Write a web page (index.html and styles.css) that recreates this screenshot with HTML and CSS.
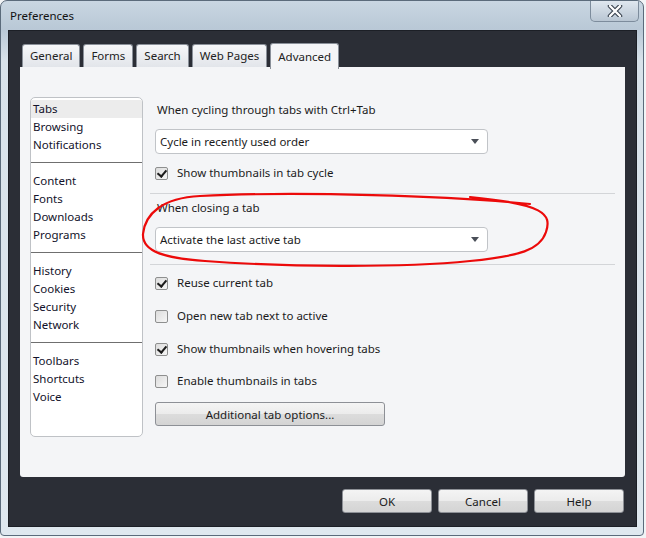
FILE: index.html
```html
<!DOCTYPE html>
<html>
<head>
<meta charset="utf-8">
<link rel="stylesheet" href="styles.css">
</head>
<body>
<div class="window">
  <div class="titlebar">
    <span class="title">Preferences</span>
    <div class="close"><svg width="18" height="12" viewBox="0 0 18 12"><path d="M4 1 L14 11 M14 1 L4 11" stroke="#3a4450" stroke-width="4.5" stroke-linecap="round"/><path d="M4 1 L14 11 M14 1 L4 11" stroke="#ffffff" stroke-width="2.4" stroke-linecap="round"/></svg></div>
  </div>
  <div class="client">
    <div class="tabs">
      <div class="tab">General</div>
      <div class="tab">Forms</div>
      <div class="tab">Search</div>
      <div class="tab">Web Pages</div>
      <div class="tab active">Advanced</div>
    </div>
    <div class="panel">
      <div class="list">
        <div class="item sel">Tabs</div>
        <div class="item">Browsing</div>
        <div class="item">Notifications</div>
        <div class="lsep"></div>
        <div class="item">Content</div>
        <div class="item">Fonts</div>
        <div class="item">Downloads</div>
        <div class="item">Programs</div>
        <div class="lsep"></div>
        <div class="item">History</div>
        <div class="item">Cookies</div>
        <div class="item">Security</div>
        <div class="item">Network</div>
        <div class="lsep"></div>
        <div class="item">Toolbars</div>
        <div class="item">Shortcuts</div>
        <div class="item">Voice</div>
      </div>
      <div class="content">
        <div class="label l1">When cycling through tabs with Ctrl+Tab</div>
        <div class="select s1"><span>Cycle in recently used order</span><i class="arrow"></i></div>
        <div class="check c0"><span class="box on"></span>Show thumbnails in tab cycle</div>
        <div class="hsep sep1"></div>
        <div class="label l2">When closing a tab</div>
        <div class="select s2"><span>Activate the last active tab</span><i class="arrow"></i></div>
        <div class="hsep sep2"></div>
        <div class="check c1"><span class="box on"></span>Reuse current tab</div>
        <div class="check c2"><span class="box"></span>Open new tab next to active</div>
        <div class="check c3"><span class="box on"></span>Show thumbnails when hovering tabs</div>
        <div class="check c4"><span class="box"></span>Enable thumbnails in tabs</div>
        <div class="btn wide">Additional tab options...</div>
      </div>
    </div>
    <div class="buttons">
      <div class="btn dlg">OK</div>
      <div class="btn dlg">Cancel</div>
      <div class="btn dlg">Help</div>
    </div>
  </div>
  <svg class="scribble" width="646" height="538" viewBox="0 0 646 538"><path d="M530 204 C450 196 300 191 200 196 C162 198 145 214 143 234 C142 252 165 258 205 261 C285 267 400 268 470 261 C520 256 540 250 546 232 C552 214 544 204 470 197" fill="none" stroke="#ec0a0a" stroke-width="2.2" stroke-linecap="round"/></svg>
</div>
</body>
</html>
```
FILE: styles.css
```css
html, body {
  margin: 0;
  padding: 0;
  background: #f2f4f6;
  font-family: "Noto Sans", "Open Sans", sans-serif;
  font-size: 11.5px;
  color: #1b1b1b;
}
.window {
  position: relative;
  width: 644px;
  height: 536px;
  box-sizing: border-box;
  border: 1px solid #5b6b7b;
  border-radius: 7px 7px 4px 4px;
  background: linear-gradient(180deg, #c9d6e2 0px, #b9c8d6 28px, #d8e2ea 60px, #dfe8ef 100%);
  overflow: hidden;
}
.titlebar {
  height: 29px;
  display: flex;
  align-items: flex-start;
  justify-content: space-between;
}
.title {
  margin: 7px 0 0 9px;
  color: #111;
}
.close {
  width: 47px;
  height: 20px;
  margin-right: 4px;
  border: 1px solid #7d8c9c;
  border-top: none;
  border-radius: 0 0 5px 5px;
  background: linear-gradient(180deg, #dfe7ef, #b9c6d3);
  display: flex;
  align-items: center;
  justify-content: center;
}
.client {
  margin: 0 6px 0 7px;
  height: 497px;
  background: #2b2e36;
  border: 1px solid #1c1f26;
  box-sizing: border-box;
  padding: 11px 11px 0 11px;
  display: flex;
  flex-direction: column;
}
.tabs {
  display: flex;
  gap: 3px;
  padding-left: 2px;
  height: 25px;
  align-items: flex-end;
}
.tab {
  height: 23px;
  box-sizing: border-box;
  padding: 0 7px;
  line-height: 22px;
  background: linear-gradient(180deg, #f6f7f9, #e2e5ea);
  border: 1px solid #8a9099;
  border-bottom: none;
  border-radius: 3px 3px 0 0;
  color: #222;
}
.tab.active {
  height: 26px;
  margin-bottom: -2px;
  background: #f4f5f7;
  line-height: 25px;
  position: relative;
  z-index: 1;
}
.panel {
  height: 410px;
  background: #f4f5f7;
  border-radius: 0 0 3px 3px;
  display: grid;
  grid-template-columns: 113px 1fr;
  column-gap: 12px;
  padding: 30px 0 0 10px;
  box-sizing: border-box;
}
.list {
  height: 340px;
  box-sizing: border-box;
  background: #fff;
  border: 1px solid #bfc2c6;
  border-radius: 5px;
  padding: 2px 0;
}
.item {
  height: 18px;
  line-height: 18px;
  padding-left: 2px;
  color: #12122a;
}
.item.sel {
  background: #ececec;
}
.lsep {
  height: 1px;
  background: #6f6f6f;
  margin: 8px 0 9px;
}
.content {
  position: relative;
}
.label {
  position: absolute;
  left: 2px;
  line-height: 18px;
}
.l1 { top: 4px; }
.l2 { top: 102px; }
.select {
  position: absolute;
  left: 0;
  width: 333px;
  height: 25px;
  box-sizing: border-box;
  border: 1px solid #c1c4c8;
  border-radius: 4px;
  background: #fff;
  display: flex;
  align-items: center;
  padding: 0 8px 0 4px;
  justify-content: space-between;
}
.s1 { top: 32px; }
.s2 { top: 130px; }
.arrow {
  width: 0;
  height: 0;
  border-left: 4px solid transparent;
  border-right: 4px solid transparent;
  border-top: 5px solid #4a4f58;
}
.check {
  position: absolute;
  left: 0;
  display: flex;
  align-items: center;
  gap: 9px;
  line-height: 18px;
}
.c0 { top: 67px; }
.c1 { top: 177px; }
.c2 { top: 210px; }
.c3 { top: 243px; }
.c4 { top: 275px; }
.box {
  width: 13px;
  height: 13px;
  box-sizing: border-box;
  border: 1px solid #8e8f8f;
  border-radius: 2px;
  background: linear-gradient(135deg, #dcdcdc, #f6f6f6);
  position: relative;
}
.box.on::after {
  content: "";
  position: absolute;
  left: 3px;
  top: 0px;
  width: 4px;
  height: 7px;
  border-right: 2px solid #1c1c1c;
  border-bottom: 2px solid #1c1c1c;
  transform: rotate(40deg);
}
.hsep {
  position: absolute;
  left: -5px;
  width: 465px;
  height: 1px;
  background: #d3d5d8;
}
.sep1 { top: 96px; }
.sep2 { top: 167px; }
.btn {
  box-sizing: border-box;
  height: 24px;
  border: 1px solid #8d9096;
  border-radius: 3px;
  background: linear-gradient(180deg, #f4f4f4 0%, #ececec 48%, #dcdcdc 52%, #d4d4d4 100%);
  display: flex;
  align-items: center;
  justify-content: center;
  color: #1b1b1b;
}
.wide {
  position: absolute;
  left: 0;
  top: 305px;
  width: 230px;
}
.buttons {
  display: flex;
  justify-content: flex-end;
  gap: 6px;
  margin-top: 12px;
  padding-right: 1px;
}
.dlg {
  width: 90px;
}
.scribble {
  position: absolute;
  left: -1px;
  top: -1px;
  pointer-events: none;
}
```
